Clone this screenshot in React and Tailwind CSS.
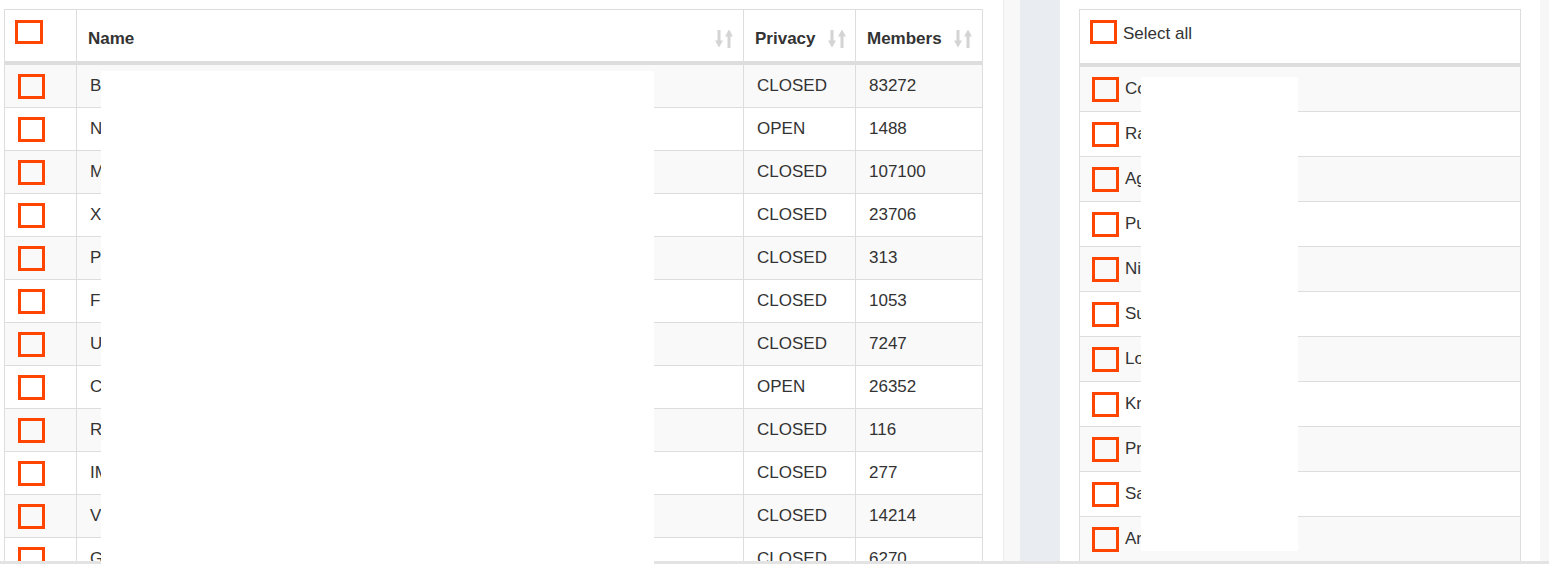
import React from "react";

const rows = [
  ["B", "CLOSED", "83272"],
  ["N", "OPEN", "1488"],
  ["M", "CLOSED", "107100"],
  ["X", "CLOSED", "23706"],
  ["P", "CLOSED", "313"],
  ["F", "CLOSED", "1053"],
  ["U", "CLOSED", "7247"],
  ["C", "OPEN", "26352"],
  ["R", "CLOSED", "116"],
  ["IM", "CLOSED", "277"],
  ["V", "CLOSED", "14214"],
  ["G", "CLOSED", "6270"],
];

const items = ["Co", "Ra", "Ag", "Pu", "Ni", "Su", "Lo", "Kr", "Pr", "Sa", "Ar"];

function SortIcon() {
  return (
    <svg width="18" height="19" viewBox="0 0 18 19" className="shrink-0">
      <rect x="2.5" y="1" width="3" height="12" fill="#d4d4d4" />
      <polygon points="0,11.5 8,11.5 4,18.5" fill="#d4d4d4" />
      <polygon points="10,7.5 18,7.5 14,0.5" fill="#d4d4d4" />
      <rect x="12.5" y="7" width="3" height="12" fill="#d4d4d4" />
    </svg>
  );
}

function Box({ className = "" }) {
  return <div className={"border-[3px] border-[#ff4500] shrink-0 " + className} />;
}

export default function App() {
  return (
    <div
      className="relative w-[1549px] h-[564px] overflow-hidden bg-white text-[17px] text-[#333]"
      style={{ fontFamily: '"Liberation Sans", Arial, sans-serif' }}
    >
      <div className="flex h-[561px] overflow-hidden">
        {/* Left panel */}
        <div className="w-[1003px] shrink-0 bg-white pl-[4px] pt-[9px]">
          <div className="w-[979px] border border-[#ddd]">
            <div className="flex h-[55px] border-b-4 border-[#ddd] font-bold">
              <div className="w-[72px] border-r border-[#ddd] pl-[10px] pt-[10px]">
                <Box className="w-[28px] h-[24px] bg-white" />
              </div>
              <div className="w-[667px] border-r border-[#ddd] flex items-center justify-between pl-[11px] pr-[10px] pt-[6px]">
                <span>Name</span>
                <SortIcon />
              </div>
              <div className="w-[112px] border-r border-[#ddd] flex items-center justify-between pl-[11px] pr-[9px] pt-[6px]">
                <span>Privacy</span>
                <SortIcon />
              </div>
              <div className="flex-1 flex items-center justify-between pl-[11px] pr-[10px] pt-[6px]">
                <span>Members</span>
                <SortIcon />
              </div>
            </div>
            {rows.map((r, i) => (
              <div
                key={i}
                className={
                  "flex h-[43px] border-b border-[#ddd] " +
                  (i % 2 === 0 ? "bg-[#f9f9f9]" : "bg-white")
                }
              >
                <div className="w-[72px] border-r border-[#ddd] pl-[13px] flex items-center">
                  <Box className="w-[27px] h-[25px]" />
                </div>
                <div className="w-[667px] border-r border-[#ddd] flex items-center pl-[13px]">
                  {r[0]}
                </div>
                <div className="w-[112px] border-r border-[#ddd] flex items-center pl-[13px]">
                  {r[1]}
                </div>
                <div className="flex-1 flex items-center pl-[13px]">{r[2]}</div>
              </div>
            ))}
          </div>
        </div>

        {/* Divider area */}
        <div className="w-[17px] shrink-0 bg-[#f8f8f8] border-l border-[#ececec]" />
        <div className="w-[40px] shrink-0 bg-[#e9edf1]" />

        {/* Right panel */}
        <div className="w-[480px] shrink-0 bg-white pl-[19px] pt-[9px]">
          <div className="w-[442px] border border-[#ddd]">
            <div className="flex items-start gap-[6px] h-[57px] border-b-4 border-[#ddd] pl-[10px] pt-[10px]">
              <Box className="w-[27px] h-[24px] bg-white" />
              <span className="leading-[24px] pt-[2px]">Select all</span>
            </div>
            {items.map((t, i) => (
              <div
                key={i}
                className={
                  "flex items-center gap-[6px] h-[45px] border-b border-[#ddd] pl-[12px] " +
                  (i % 2 === 0 ? "bg-[#f9f9f9]" : "bg-white")
                }
              >
                <Box className="w-[27px] h-[25px]" />
                <span>{t}</span>
              </div>
            ))}
          </div>
        </div>
        <div className="flex-1 bg-[#f7f7f7]" />
      </div>
      <div className="h-[3px] bg-[#e3e3e3]" />

      {/* redaction blocks */}
      <div className="absolute left-[101px] top-[71px] w-[553px] h-[493px] bg-white" />
      <div className="absolute left-[1141px] top-[77px] w-[157px] h-[474px] bg-white" />
    </div>
  );
}
